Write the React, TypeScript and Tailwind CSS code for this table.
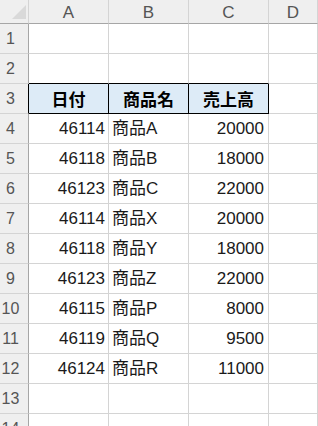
const rows: [number, string, number][] = [
  [46114, '商品A', 20000],
  [46118, '商品B', 18000],
  [46123, '商品C', 22000],
  [46114, '商品X', 20000],
  [46118, '商品Y', 18000],
  [46123, '商品Z', 22000],
  [46115, '商品P', 8000],
  [46119, '商品Q', 9500],
  [46124, '商品R', 11000],
];

const font = { fontFamily: '"Noto Sans CJK JP", "Noto Sans", sans-serif' };
const latin = { fontFamily: '"Liberation Sans", "Noto Sans CJK JP", sans-serif' };

function RowHead({ n, dark }: { n: number; dark?: boolean }) {
  return (
    <div
      className={`flex h-[30px] items-center justify-center border-b border-r border-b-[#d4d4d4] bg-[#efefef] pr-[7px] text-[16px] text-[#555] ${
        dark ? 'border-r-black' : 'border-r-[#a6a6a6]'
      }`}
      style={latin}
    >
      {n}
    </div>
  );
}

function Cell({
  children,
  align = 'left',
  className = '',
  num,
}: {
  children?: React.ReactNode;
  align?: 'left' | 'right' | 'center';
  className?: string;
  num?: boolean;
}) {
  const a =
    align === 'right'
      ? 'justify-end pr-[3px]'
      : align === 'center'
      ? 'justify-center'
      : 'justify-start pl-[3px]';
  return (
    <div
      className={`flex h-[30px] items-center whitespace-nowrap border-b border-r border-[#d4d4d4] text-[17px] text-[#1a1a1a] ${a} ${className}`}
      style={num ? latin : undefined}
    >
      {children}
    </div>
  );
}

export default function App() {
  return (
    <div className="h-[426px] w-[318px] overflow-hidden bg-white" style={font}>
      <div className="grid grid-cols-[29px_80px_80px_80px_1fr]">
        {/* column headers */}
        <div className="relative h-[24px] border-b border-r border-b-[#a6a6a6] border-r-[#d4d4d4] bg-[#efefef]">
          <svg className="absolute left-0 top-0" width="28" height="23">
            <polygon points="12,19 26,19 26,5" fill="#d9d9d9" />
          </svg>
        </div>
        {['A', 'B', 'C', 'D'].map((c) => (
          <div
            key={c}
            className="flex h-[24px] items-center justify-center border-b border-r border-b-[#a6a6a6] border-r-[#d4d4d4] bg-[#efefef] pt-[3px] text-[17px] text-[#555]"
            style={latin}
          >
            {c}
          </div>
        ))}

        {/* row 1, 2 */}
        <RowHead n={1} />
        <Cell />
        <Cell />
        <Cell />
        <Cell />
        <RowHead n={2} />
        <Cell className="border-b-black" />
        <Cell className="border-b-black" />
        <Cell className="border-b-black" />
        <Cell />

        {/* row 3: table header */}
        <RowHead n={3} dark />
        {['日付', '商品名', '売上高'].map((h) => (
          <Cell
            key={h}
            align="center"
            className="border-b-black border-r-black bg-[#ddebf7] font-bold text-black"
          >
            {h}
          </Cell>
        ))}
        <Cell />

        {rows.map(([d, name, amt], i) => (
          <div key={i} className="contents">
            <RowHead n={i + 4} />
            <Cell align="right" num>
              {d}
            </Cell>
            <Cell num>{name}</Cell>
            <Cell align="right" num className="pr-[4px]">
              {amt}
            </Cell>
            <Cell />
          </div>
        ))}

        <RowHead n={13} />
        <Cell />
        <Cell />
        <Cell />
        <Cell />
        <RowHead n={14} />
        <Cell />
        <Cell />
        <Cell />
        <Cell />
      </div>
    </div>
  );
}
